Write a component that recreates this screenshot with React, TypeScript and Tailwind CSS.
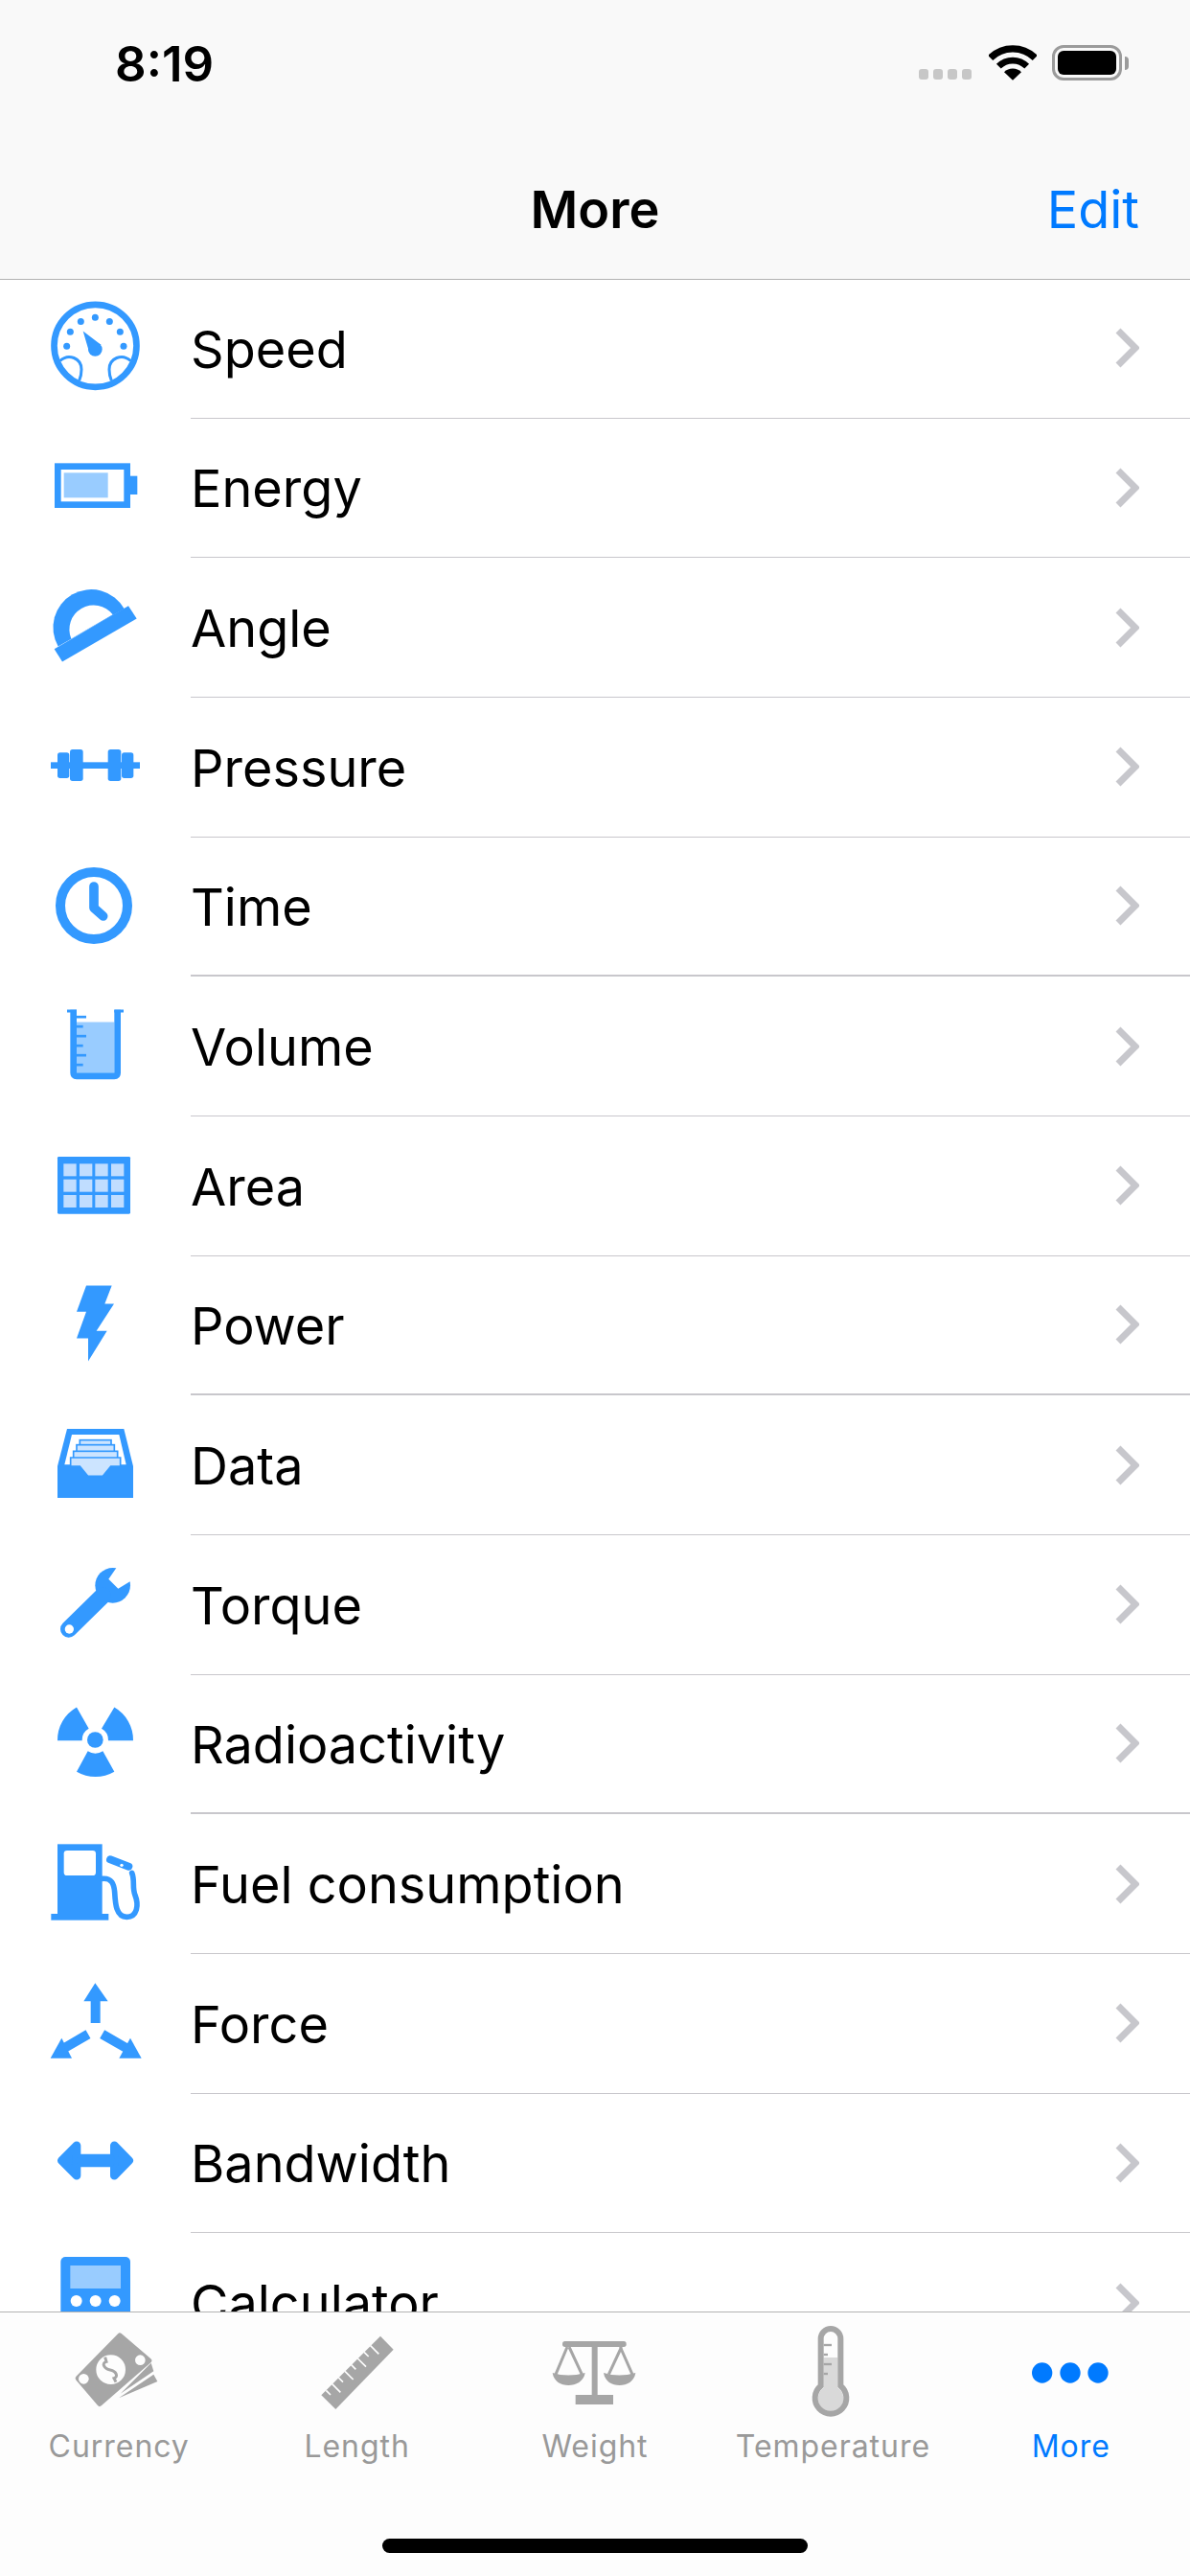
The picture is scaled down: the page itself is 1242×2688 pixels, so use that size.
import type { ReactNode } from 'react';

const BLUE = '#3399ff';
const LIGHT = '#99ccff';
const GRAY = '#a6a6a6';

// Every list icon is a 120px square centred on the row
function ListIcon({ box, children }: { box: string; children: ReactNode }) {
    return (
        <svg viewBox={box} className="w-[120px] h-[120px] overflow-visible">
            {children}
        </svg>
    );
}

const units: { name: string; box: string; icon: ReactNode }[] = [
    {
        name: 'Speed',
        box: '30 25.5 360 360',
        icon: (
            <g fill={BLUE}>
                <circle cx="208.5" cy="196" r="129" fill="none" stroke={BLUE} strokeWidth="20" />
                {[[119, 197], [130, 152], [163, 120], [208, 107], [253, 120], [286, 152], [297, 197]].map(([x, y]) => (
                    <circle key={x} cx={x} cy={y} r="10.5" />
                ))}
                <path d="M170 150 L226 193 L190 218 Z" />
                <circle cx="208" cy="207" r="22" />
                <path d="M98 243 C125 218 165 235 165 270 Q165 290 158 305" fill="none" stroke={BLUE} strokeWidth="9" />
                <path d="M319 243 C292 218 252 235 252 270 Q252 290 259 305" fill="none" stroke={BLUE} strokeWidth="9" />
            </g>
        ),
    },
    {
        name: 'Energy',
        box: '30 462 360 360',
        icon: (
            <g>
                <rect x="91" y="575" width="217" height="120" fill="none" stroke={BLUE} strokeWidth="20" />
                <rect x="318" y="605" width="22" height="58" fill={BLUE} />
                <rect x="110" y="595" width="138" height="78" fill={LIGHT} />
            </g>
        ),
    },
    {
        name: 'Angle',
        box: '30 898.5 360 360',
        icon: (
            <g>
                <path d="M92 1137 A118 118 0 0 1 299 1019 Z" fill={BLUE} />
                <path d="M80 1145 L105 1185 L338 1050 L312 1010 Z" fill={BLUE} />
                <path d="M133 1113 A76 76 0 0 1 263 1037 Z" fill="#fff" />
            </g>
        ),
    },
    {
        name: 'Pressure',
        box: '30 120 360 360',
        icon: (
            <g fill={BLUE}>
                <rect x="69" y="283" width="279" height="20" />
                <rect x="90" y="253" width="37" height="80" rx="8" />
                <rect x="129" y="243" width="41" height="99" rx="8" />
                <rect x="248" y="243" width="41" height="99" rx="8" />
                <rect x="291" y="253" width="37" height="80" rx="8" />
            </g>
        ),
    },
    {
        name: 'Time',
        box: '30 558 360 360',
        icon: (
            <g fill="none" stroke={BLUE}>
                <circle cx="204" cy="735" r="105" strokeWidth="30" />
                <path d="M204 675 V742 L233 768" strokeWidth="29" strokeLinecap="round" strokeLinejoin="round" />
            </g>
        ),
    },
    {
        name: 'Volume',
        box: '30 994.5 360 360',
        icon: (
            <g>
                <rect x="150" y="1098" width="118" height="160" fill={LIGHT} />
                <path d="M140 1060 V1257 Q140 1267 150 1267 H268 Q278 1267 278 1257 V1060" fill="none" stroke={BLUE} strokeWidth="20" />
                <rect x="120" y="1059" width="30" height="9" fill={BLUE} />
                <rect x="268" y="1059" width="29" height="9" fill={BLUE} />
                {[[1082, 180], [1112, 170], [1142, 180], [1172, 170], [1202, 180], [1232, 170]].map(([y, x]) => (
                    <path key={y} d={`M150 ${y} H${x}`} stroke={BLUE} strokeWidth="8" />
                ))}
            </g>
        ),
    },
    {
        name: 'Area',
        box: '30 171 360 360',
        icon: (
            <g>
                <rect x="90" y="258" width="228" height="179" rx="4" fill={BLUE} />
                {[280, 329, 378].map((y) =>
                    [109, 159, 208, 258].map((x) => (
                        <rect key={`${x}-${y}`} x={x} y={y} width="40" height="39" fill="#c0ddff" />
                    )),
                )}
            </g>
        ),
    },
    {
        name: 'Power',
        box: '30 607.5 360 360',
        icon: <path d="M180 663 H260 L238 720 H267 L212 805 H245 L186 900 V828 H150 L180 745 H150 Z" fill={BLUE} />,
    },
    {
        name: 'Data',
        box: '30 1044 360 360',
        icon: (
            <g>
                <path d="M120 1110 H298 L327 1227 V1326 H90 V1227 Z" fill={BLUE} />
                <path d="M135 1128 H283 L305 1222 H112 Z" fill="#fff" />
                <g fill="#cce4ff" stroke={BLUE} strokeWidth="5">
                    <rect x="160" y="1145" width="98" height="30" />
                    <rect x="150" y="1160" width="118" height="30" />
                    <rect x="140" y="1180" width="138" height="30" />
                    <path d="M131 1200 H287 V1227 H257 L232 1258 H185 L160 1227 H131 Z" />
                </g>
            </g>
        ),
    },
    {
        name: 'Torque',
        box: '30 222 360 360',
        icon: (
            <g>
                <circle cx="263" cy="340" r="55" fill={BLUE} />
                <path d="M232 372 L125 477" stroke={BLUE} strokeWidth="52" strokeLinecap="round" />
                <path d="M278 280 L250 320 L280 350 L322 325 L345 280 Z" fill="#fff" />
                <circle cx="127" cy="477" r="14" fill="#fff" />
            </g>
        ),
    },
    {
        name: 'Radioactivity',
        box: '30 658.5 360 360',
        icon: (
            <g fill={BLUE}>
                <circle cx="208" cy="825" r="25" />
                <path d="M90 827 A118 118 0 0 1 150 723 L188 790 A41 41 0 0 0 167 827 Z" />
                <path d="M327 827 A118 118 0 0 0 268 723 L228 790 A41 41 0 0 1 249 827 Z" />
                <path d="M150 925 A118 118 0 0 0 268 925 L232 860 A41 41 0 0 1 185 860 Z" />
            </g>
        ),
    },
    {
        name: 'Fuel consumption',
        box: '-15 -15 360 360',
        icon: (
            <g>
                <rect x="45" y="40" width="140" height="225" fill={BLUE} />
                <rect x="25" y="258" width="180" height="20" fill={BLUE} />
                <rect x="65" y="60" width="100" height="78" rx="10" fill="#fff" />
                <path
                    d="M185 148 C215 145 222 165 224 190 C226 225 228 268 262 268 C295 268 300 230 288 200 C278 175 288 155 278 130"
                    fill="none"
                    stroke={BLUE}
                    strokeWidth="17"
                    strokeLinecap="round"
                />
                <path d="M210 88 L268 110" stroke={BLUE} strokeWidth="24" strokeLinecap="round" />
                <circle cx="246" cy="106" r="5" fill="#fff" />
            </g>
        ),
    },
    {
        name: 'Force',
        box: '30 273 360 360',
        icon: (
            <g fill={BLUE}>
                <path d="M208 325 L248 382 H224 V450 H194 V382 H172 Z" />
                <path d="M353 560 L318 497 L283 560 Z" />
                <path d="M68 560 L103 497 L135 560 Z" />
                <path d="M230 485 L305 528 M186 485 L112 528" stroke={BLUE} strokeWidth="30" />
            </g>
        ),
    },
    {
        name: 'Bandwidth',
        box: '30 709.5 360 360',
        icon: (
            <g fill={BLUE} stroke={BLUE} strokeWidth="26" strokeLinejoin="round">
                <path d="M103 882 L150 835 V929 Z" />
                <path d="M314 882 L268 835 V929 Z" />
                <rect x="163" y="875" width="92" height="14" strokeWidth="26" />
            </g>
        ),
    },
    {
        name: 'Calculator',
        box: '30 1146 360 360',
        icon: (
            <g>
                <rect x="100" y="1182" width="218" height="300" rx="15" fill={BLUE} />
                <rect x="130" y="1209" width="158" height="72" fill={LIGHT} />
                {[1320, 1380, 1440].map((y) =>
                    [149, 209, 269].map((x) => <circle key={`${x}-${y}`} cx={x} cy={y} r="18" fill="#fff" />),
                )}
            </g>
        ),
    },
];

const tabIcons: Record<string, ReactNode> = {
    Currency: (
        <g fill={GRAY}>
            <path d="M168 36 L260 115 L105 250 L37 170 Z" stroke={GRAY} strokeWidth="16" strokeLinejoin="round" />
            <circle cx="232" cy="113" r="16" fill="#fdfdfd" />
            <circle cx="55" cy="172" r="16" fill="#fdfdfd" />
            <ellipse cx="140" cy="143" rx="46" ry="46" fill="#fdfdfd" />
            <path d="M122 104 L126 118 C110 122 118 140 138 144 C158 148 164 166 150 170 L156 182" fill="none" stroke={GRAY} strokeWidth="9" />
            <path d="M170 218 L266 122 L274 148 Z" />
            <path d="M165 232 L274 158 L286 180 Z" />
        </g>
    ),
    Length: (
        <g>
            <path d="M237 38 L278 80 L97 267 L52 223 Z" fill={GRAY} />
            {[[67, 208, 14], [86, 188, 26], [106, 168, 14], [126, 148, 26], [146, 128, 14], [166, 108, 26], [186, 88, 14], [206, 68, 26]].map(([x, y, l]) => (
                <path key={x} d={`M${x} ${y} l${l} ${l}`} stroke="#fdfdfd" strokeWidth="5" />
            ))}
        </g>
    ),
    Weight: (
        <g fill={GRAY}>
            <rect x="63" y="54" width="200" height="18" rx="8" />
            <rect x="155" y="60" width="18" height="170" />
            <rect x="104" y="222" width="118" height="30" />
            <path d="M78 72 L42 158 M84 72 L124 158 M248 72 L208 158 M244 72 L282 158" stroke={GRAY} strokeWidth="9" fill="none" />
            <path d="M32 153 Q80 168 134 153 C130 180 105 192 82 192 C58 192 36 180 32 153 Z" />
            <path d="M192 153 Q240 168 292 153 C288 180 265 192 242 192 C218 192 196 180 192 153 Z" />
        </g>
    ),
    Temperature: (
        <g>
            <path d="M137 105 H181 V200 A40 40 0 1 1 137 200 Z" fill="#d9d9d9" />
            <path d="M128 194 V46 A31 31 0 0 1 190 46 V194 A49 49 0 1 1 128 194 Z" fill="none" stroke={GRAY} strokeWidth="18" />
            {[[66, 162], [96, 150], [126, 162], [156, 150]].map(([y, x]) => (
                <path key={y} d={`M137 ${y} H${x}`} stroke={GRAY} strokeWidth="7" />
            ))}
        </g>
    ),
    More: (
        <g fill="#007aff">
            <circle cx="74" cy="153" r="32" />
            <circle cx="162" cy="153" r="32" />
            <circle cx="249" cy="153" r="32" />
        </g>
    ),
};

export default function App() {
    return (
        <div className="w-[1242px] h-[2688px] flex flex-col bg-white overflow-hidden font-['Inter',sans-serif] text-black">
            {/* Status bar + navigation bar */}
            <header className="relative z-10 h-[292px] shrink-0 bg-[#f9f9f9] border-b border-[#b2b2b2]">
                <div className="h-[146px] flex items-start justify-between pl-[120px] pr-[64px] pt-[47px]">
                    <span className="mt-[1px] text-[51px] leading-[38px] font-semibold">8:19</span>
                    <div className="flex items-end">
                        <div className="flex gap-[5px] mb-[1px]">
                            <span className="w-[10px] h-[11px] rounded-[3px] bg-[#c7c7c7]" />
                            <span className="w-[10px] h-[11px] rounded-[3px] bg-[#c7c7c7]" />
                            <span className="w-[10px] h-[11px] rounded-[3px] bg-[#c7c7c7]" />
                            <span className="w-[10px] h-[11px] rounded-[3px] bg-[#c7c7c7]" />
                        </div>
                        <svg viewBox="0 0 150 110" className="w-[50px] h-[37px] ml-[18px]">
                            <path d="M5 40 A99 99 0 0 1 145 40" fill="none" stroke="#000" strokeWidth="22" />
                            <path d="M31 66 A62 62 0 0 1 119 66" fill="none" stroke="#000" strokeWidth="20" />
                            <path d="M75 110 L48 84 A38 38 0 0 1 102 84 Z" fill="#000" />
                        </svg>
                        <div className="flex items-center gap-[3px] ml-[16px]">
                            <div className="w-[73px] h-[37px] rounded-[12px] border-[3px] border-[#9b9b9b] p-[3px]">
                                <div className="w-full h-full rounded-[6px] bg-black" />
                            </div>
                            <span className="w-[4px] h-[14px] rounded-r-[4px] bg-[#9b9b9b]" />
                        </div>
                    </div>
                </div>
                <div className="h-[145px] grid grid-cols-3 items-center">
                    <span />
                    <h1 className="text-center text-[54px] font-semibold">More</h1>
                    <button className="text-right pr-[53px] text-[54px] text-[#007aff]">Edit</button>
                </div>
            </header>

            {/* Converter list, cut off by the tab bar */}
            <main className="flex-1 -mt-[1px] overflow-hidden">
                {units.map((unit, index) => (
                    <div key={unit.name} className="h-[145.67px] flex">
                        <div className="w-[199px] shrink-0 pl-[40px] flex items-center">
                            <ListIcon box={unit.box}>{unit.icon}</ListIcon>
                        </div>
                        <div
                            className={`flex-1 flex items-center justify-between pr-[53px] border-[#c8c7cc] ${
                                index === 4 || index === 7 || index === 10 ? 'border-b-2' : 'border-b'
                            }`}
                        >
                            <span className="mt-[2px] text-[54px] whitespace-nowrap">{unit.name}</span>
                            <svg viewBox="0 0 25 42" className="w-[25px] h-[42px]">
                                <path d="M3 3 L21 21 L3 39" fill="none" stroke="#c7c7cc" strokeWidth="7" />
                            </svg>
                        </div>
                    </div>
                ))}
            </main>

            {/* Tab bar */}
            <footer className="h-[276px] shrink-0 flex flex-col bg-[#fdfdfd] border-t border-[#b2b2b2]">
                <nav className="grid grid-cols-5 pt-[12px]">
                    {Object.entries(tabIcons).map(([label, icon]) => (
                        <div key={label} className="flex flex-col items-center">
                            <svg viewBox="0 0 330 300" className="w-[110px] h-[100px] overflow-visible">
                                {icon}
                            </svg>
                            <span
                                className={`mt-[10px] text-[32px] leading-[36px] font-normal tracking-[0.03em] ${
                                    label === 'More' ? 'text-[#007aff]' : 'text-[#999999]'
                                }`}
                            >
                                {label}
                            </span>
                        </div>
                    ))}
                </nav>
                <div className="mt-auto mb-[24px] mx-auto w-[444px] h-[15px] rounded-full bg-black" />
            </footer>
        </div>
    );
}
